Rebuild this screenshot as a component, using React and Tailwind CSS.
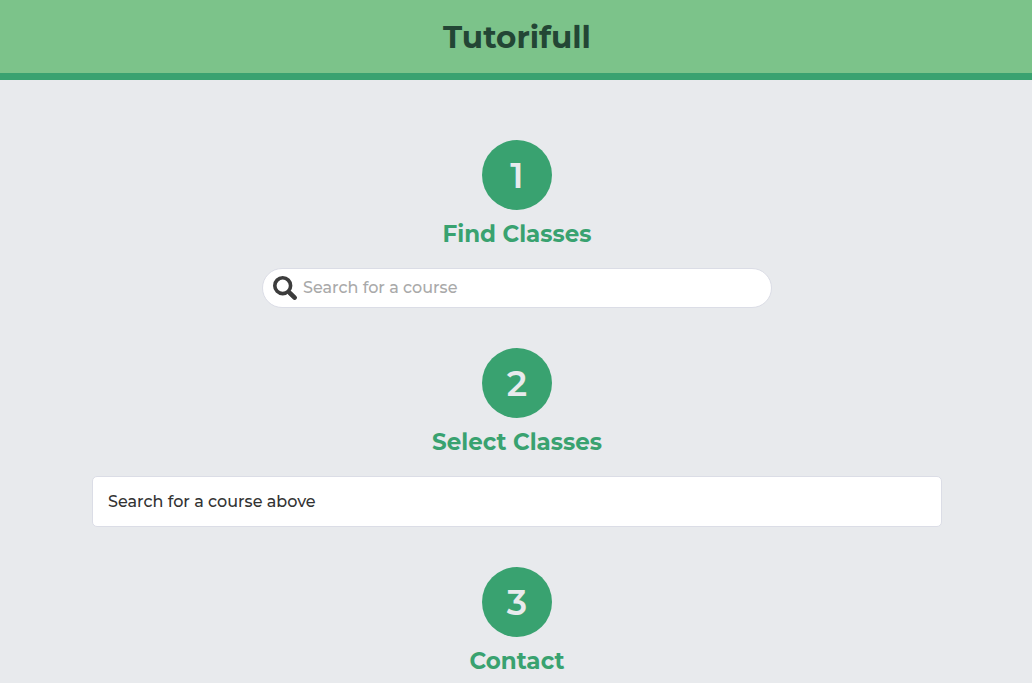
import React from "react";

function Step({ number, title, htmlFor, children }) {
  return (
    <section className="flex w-full flex-col items-center">
      <span className="flex size-[70px] items-center justify-center rounded-full bg-[#39a270] text-[35px] leading-none font-semibold text-[#e8eaed]">
        {number}
      </span>
      <h2 className="mt-2 text-[23px] leading-8 font-bold text-[#39a270]">
        {htmlFor ? <label htmlFor={htmlFor}>{title}</label> : title}
      </h2>
      {children}
    </section>
  );
}

export default function App() {
  return (
    <div className="min-h-screen bg-[#e8eaed] font-['Montserrat','Inter',sans-serif] text-[#333333]">
      <header className="flex h-20 items-center justify-center border-b-7 border-[#39a270] bg-[#7cc38a] pl-0.5">
        <h1 className="text-[31px] leading-10 font-bold text-[#234635]">Tutorifull</h1>
      </header>
      <main className="mx-auto mt-15 flex max-w-[852px] flex-col items-center gap-10 pl-0.5">
        <Step number="1" title="Find Classes" htmlFor="course">
          <div className="mt-[18px] flex h-10 w-3/5 items-center gap-1.5 rounded-full border border-[#dbdde6] bg-white px-2.5">
            <svg viewBox="0 0 24 24" className="size-6" fill="none" stroke="#3c3c3c" aria-hidden="true">
              <circle cx="9.700" cy="9.700" r="7.900" strokeWidth="3.600" />
              <path d="M15.200 15.400l5.800 5.600" strokeWidth="3.800" />
              <path d="M17 17.200l4.600 4.400" strokeWidth="4.600" strokeLinecap="round" />
            </svg>
            <input id="course" type="text" placeholder="Search for a course" className="min-w-0 flex-1 bg-transparent text-base font-medium outline-none placeholder:text-[#a9a9a9]" />
          </div>
        </Step>
        <Step number="2" title="Select Classes">
          <p className="mt-[18px] w-full rounded-[5px] border border-[#dbdde6] bg-white px-[15px] py-3 text-base leading-[25px] font-medium">Search for a course above</p>
        </Step>
        <Step number="3" title="Contact" />
      </main>
    </div>
  );
}
